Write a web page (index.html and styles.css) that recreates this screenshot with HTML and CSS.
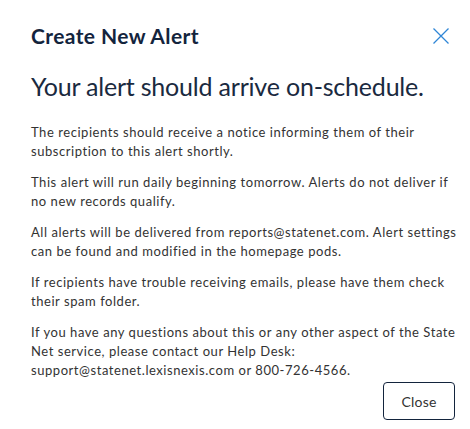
FILE: index.html
```html
<!DOCTYPE html>
<html>
<head>
<meta charset="utf-8">
<link rel="stylesheet" href="styles.css">
</head>
<body>
<div class="modal">
  <div class="header">
    <h1 class="title">Create New Alert</h1>
    <button class="x" aria-label="Close">
      <svg width="16" height="16" viewBox="0 0 16 16"><path d="M0.5 0.5L15.5 15.5M15.5 0.5L0.5 15.5" stroke="#2f86d6" stroke-width="1.3" fill="none"/></svg>
    </button>
  </div>
  <h2 class="lead">Your alert should arrive on-schedule.</h2>
  <div class="body">
    <p>The recipients should receive a notice informing them of their subscription to this alert shortly.</p>
    <p>This alert will run daily beginning tomorrow. Alerts do not deliver if no new records qualify.</p>
    <p>All alerts will be delivered from reports@statenet.com. Alert settings can be found and modified in the homepage pods.</p>
    <p>If recipients have trouble receiving emails, please have them check their spam folder.</p>
    <p>If you have any questions about this or any other aspect of the State Net service, please contact our Help Desk: support@statenet.lexisnexis.com or 800-726-4566.</p>
  </div>
  <div class="footer">
    <button class="close">Close</button>
  </div>
</div>
</body>
</html>
```
FILE: styles.css
```css
* { box-sizing: border-box; }
html, body { margin: 0; padding: 0; background: #fff; }
body { font-family: Lato, "Open Sans", sans-serif; color: #333; }
.modal { width: 470px; height: 429px; padding: 21px 16px 0 31px; }
.header { display: flex; justify-content: space-between; align-items: center; height: 28px; }
.title { margin: 0; font-size: 21px; font-weight: 700; color: #13243d; letter-spacing: 0.4px; }
.x { background: none; border: 0; padding: 0; width: 16px; height: 16px; display: flex; margin-right: 5px; margin-top: 2px; cursor: pointer; }
.lead { margin: 21px 0 0; font-size: 25px; font-weight: 400; color: #1a2a40; line-height: 32px; letter-spacing: -0.2px; }
.body { margin-top: 21px; width: 428px; }
.body p { margin: 0 0 12px; font-size: 13px; line-height: 19px; color: #333; letter-spacing: 0.55px; }
.body p:last-child { margin-bottom: 0; }
.footer { display: flex; justify-content: flex-end; margin-top: 2px; }
.close { width: 72px; height: 38px; border: 1px solid #13243d; border-radius: 4px; background: #fff; font-family: Lato, sans-serif; font-size: 14px; color: #333; letter-spacing: 0.2px; margin-right: -1px; }
```
